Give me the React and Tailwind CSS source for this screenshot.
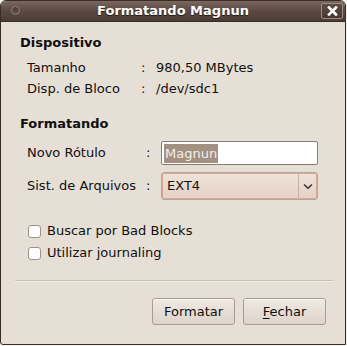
export default function App() {
  return (
    <div className="w-[347px] h-[346px] bg-[#f4f2ef] font-['DejaVu_Sans',sans-serif] text-[13px] leading-[16px] text-[#101010]">
      <div className="w-[346px] h-[345px] flex flex-col overflow-hidden rounded-t-[6px] rounded-bl-[3px] border border-[#3a2d28] bg-[#e6dfd6]">
        {/* title bar */}
        <div className="relative h-[21px] shrink-0 flex items-center justify-center border-b border-[#3a2d28] bg-gradient-to-b from-[#7a675e] via-[#5b4a43] to-[#4c3c36]">
          <span className="absolute left-[10px] top-[5px] w-[9px] h-[9px] rounded-full border border-[#8f7d73] bg-gradient-to-b from-[#4a3a34] to-[#65544c]" />
          <span className="font-bold text-white [text-shadow:0_1px_1px_#1e1512]">Formatando Magnun</span>
          <span className="absolute right-[2px] top-[2px] w-[22px] h-[16px] flex items-center justify-center rounded-[2px] border border-[#9c8c83] bg-gradient-to-b from-[#5e4d46] to-[#47372f]">
            <svg width="11" height="10" viewBox="0 0 11 10">
              <path d="M2 1.5 L9 8.5 M9 1.5 L2 8.5" stroke="#ffffff" strokeWidth="2.6" strokeLinecap="square" />
            </svg>
          </span>
        </div>

        {/* Dispositivo */}
        <div className="pl-[19px] pt-[13px] font-bold">Dispositivo</div>
        <div className="pl-[26px] pt-[6px]">
          <div className="flex h-[21px] items-center">
            <span className="w-[114px]">Tamanho</span>
            <span className="w-[15px]">:</span>
            <span>980,50 MBytes</span>
          </div>
          <div className="flex h-[21px] items-center">
            <span className="w-[114px]">Disp. de Bloco</span>
            <span className="w-[15px]">:</span>
            <span>/dev/sdc1</span>
          </div>
        </div>

        {/* Formatando */}
        <div className="pl-[19px] pt-[17px] font-bold">Formatando</div>
        <div className="pl-[26px] pt-[9px]">
          <div className="flex h-[24px] items-center">
            <span className="w-[119px]">Novo Rótulo</span>
            <span className="w-[15px]">:</span>
            <div className="w-[157px] h-[24px] flex items-center rounded-[2px] border border-[#8c7b6e] bg-white pl-[2px]">
              <span className="bg-[#a39081] text-[#f3eee9] px-[1px] leading-[19px]">Magnun</span>
            </div>
          </div>
          <div className="flex h-[28px] items-center mt-[7px]">
            <span className="w-[119px]">Sist. de Arquivos</span>
            <span className="w-[15px]">:</span>
            <div className="w-[157px] h-[28px] rounded-[3px] border border-[#b3a79b]">
              <div className="flex h-full rounded-[2px] border border-[#dca793] bg-gradient-to-b from-[#efe2d9] to-[#e6d1c5]">
                <span className="flex-1 flex items-center pl-[4px]">EXT4</span>
                <span className="w-[18px] flex items-center justify-center border-l border-[#cdb3a5]">
                  <svg width="10" height="7" viewBox="0 0 10 7">
                    <path d="M1 1.5 L5 5.2 L9 1.5" fill="none" stroke="#3a3330" strokeWidth="1.5" />
                  </svg>
                </span>
              </div>
            </div>
          </div>
        </div>

        {/* checkboxes */}
        <div className="pl-[27px] pt-[20px]">
          <label className="flex h-[22px] items-center gap-[6px]">
            <span className="w-[13px] h-[13px] rounded-[3px] border border-[#9f9186] bg-white" />
            <span>Buscar por Bad Blocks</span>
          </label>
          <label className="flex h-[22px] items-center gap-[6px]">
            <span className="w-[13px] h-[13px] rounded-[3px] border border-[#9f9186] bg-white" />
            <span>Utilizar journaling</span>
          </label>
        </div>

        <div className="ml-[14px] mt-[16px] w-[318px] border-t border-[#cac0b5] border-b border-b-[#f3efea]" />

        {/* buttons */}
        <div className="flex justify-end gap-[8px] pr-[19px] pt-[16px]">
          <button className="w-[83px] h-[27px] rounded-[3px] border border-[#a99c90] bg-gradient-to-b from-[#efe9e3] to-[#ddd4ca] shadow-[inset_0_1px_0_#f8f5f2]">
            Formatar
          </button>
          <button className="w-[83px] h-[27px] rounded-[3px] border border-[#a99c90] bg-gradient-to-b from-[#efe9e3] to-[#ddd4ca] shadow-[inset_0_1px_0_#f8f5f2]">
            <span className="underline underline-offset-2">F</span>echar
          </button>
        </div>
      </div>
    </div>
  );
}
